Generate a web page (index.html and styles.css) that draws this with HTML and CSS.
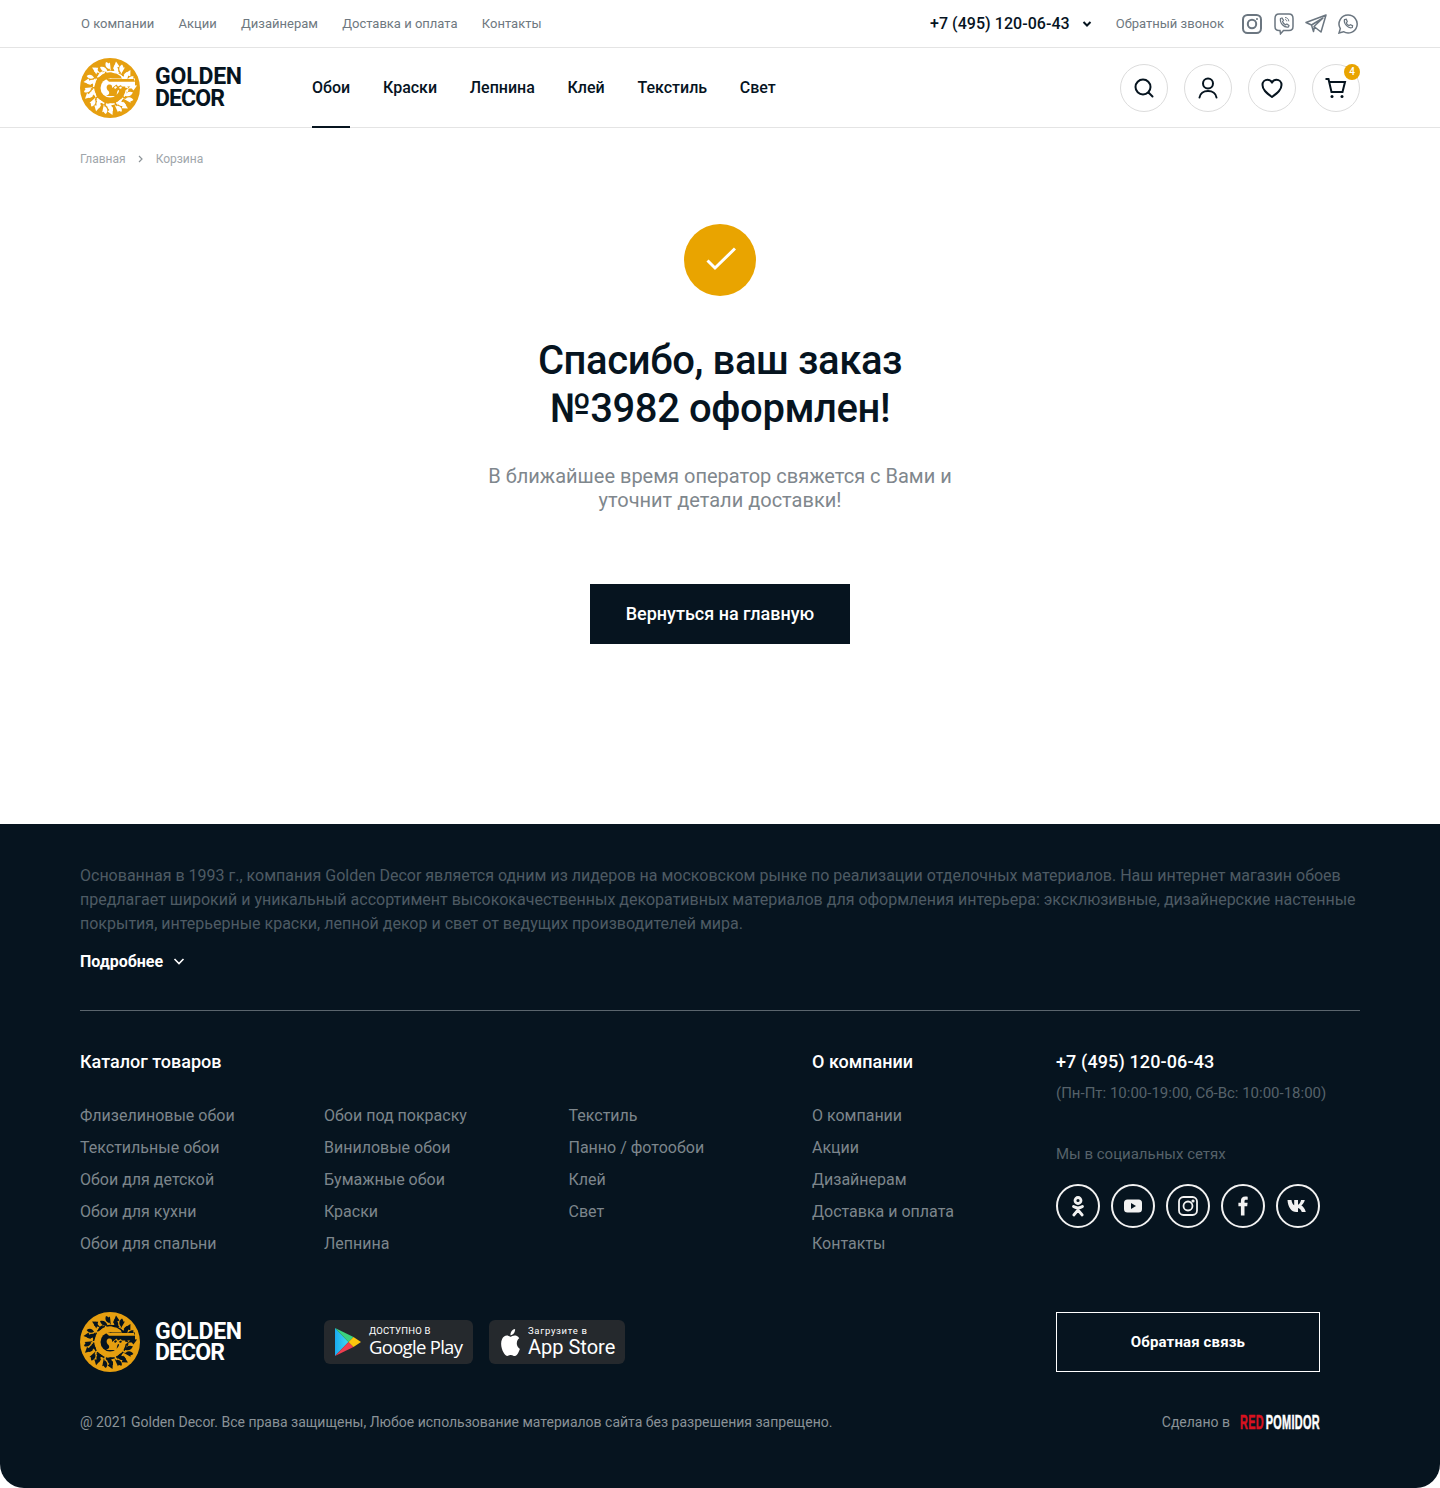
FILE: index.html
```html
<!DOCTYPE html>
<html lang="ru">
<head>
<meta charset="utf-8">
<title>Golden Decor — заказ оформлен</title>
<link rel="stylesheet" href="styles.css">
</head>
<body>
<svg class="defs" width="0" height="0" aria-hidden="true">
  <symbol id="logo-mark" viewBox="0 0 60 60">
    <circle cx="30" cy="30" r="30" fill="#e69f10"/>
    <g class="cut">
      <g id="leaf"><path d="M26 4c3.500 1 4.500 3.500 3 7-2.800-1-4.500-3.500-3-7z"/><path d="M20 9c3.500-1 6.500.5 7.500 4.500-3.500 1-6.500-.5-7.500-4.500z"/><path d="M36 3.500l-3 7.500 6.500-2.500z"/><path d="M32 14c2-1.800 5.500-1.800 7.500.5-2.300 1.500-5.500 1.500-7.500-.5z"/><path d="M15 9.500l5.500 6-6.500-2z"/></g>
      <use href="#leaf" transform="rotate(36 30 30)"/>
      <use href="#leaf" transform="rotate(72 30 30)"/>
      <use href="#leaf" transform="rotate(126 30 30)"/>
      <use href="#leaf" transform="rotate(162 30 30)"/>
      <use href="#leaf" transform="rotate(198 30 30)"/>
      <use href="#leaf" transform="rotate(234 30 30)"/>
      <use href="#leaf" transform="rotate(270 30 30)"/>
      <use href="#leaf" transform="rotate(306 30 30)"/>
    </g>
    <circle cx="30" cy="30" r="16.500" fill="none" class="ring-cut"/>
    <circle cx="30" cy="30" r="15" fill="#e69f10"/>
    <circle class="cut" cx="30" cy="30" r="9.500"/>
    <path class="cut" d="M30 20.500h25v8H30z"/>
    <path fill="#e69f10" d="M26 21h28l1 2.800H29z"/>
    <path fill="#e69f10" d="M26 38c3-1 4-3 2.500-5-2.500-2-2.500-6 .5-6.500 2.500-.5 3.500 1.500 3 3.500l4.500-3.500 1.500 2 3-1.500 1 2.500 6 .5c-1.500 3-7 4-10 2-1 2-1.500 4-1 6z"/>
    <path class="cut" d="M34 29.500l2-1.500 1 1.500-2 1.500zM39 29.500l2-1 1 1.500-2 1z"/>
  </symbol>
</svg>

<header class="site-header">
  <div class="topbar">
    <nav class="top-links">
      <a>О компании</a><a>Акции</a><a>Дизайнерам</a><a>Доставка и оплата</a><a>Контакты</a>
    </nav>
    <div class="top-right">
      <a class="top-phone">+7 (495) 120-06-43</a>
      <svg class="chev" width="10" height="6" viewBox="0 0 10 6"><path d="M1.500 1L5 4.500 8.500 1" fill="none" stroke="#06141f" stroke-width="2"/></svg>
      <a class="callback">Обратный звонок</a>
      <div class="messengers">
        <svg width="20" height="20" viewBox="0 0 20 20" fill="none" stroke="#6b7680" stroke-width="2"><rect x="1" y="1" width="18" height="18" rx="4.500"/><circle cx="10" cy="10" r="4.200"/><circle cx="15" cy="5" r=".6" fill="#6b7680" stroke-width="1"/></svg>
        <svg class="viber" width="20" height="22" viewBox="0 0 20 22" fill="none" stroke="#6b7680" stroke-width="1.500"><path d="M6 17.500H5c-2.500 0-4-1.500-4-4V5.500C1 3 2.500 1 5 1h10c2.500 0 4 2 4 4.500v8c0 2.500-1.500 4-4 4H9.500L6.500 20.800z"/><path d="M6.500 5.500l1.500-.5 1.500 2.300-1 1.200c.6 1.700 1.700 2.800 3.200 3.400l1.200-1 2.100 1.500-.5 1.500c-4.500 1-9-4-8-8.400z" stroke-width="1.200"/><path d="M11 4.500c2 0 3.800 1.600 3.800 3.800M11 6.500c1 0 1.800.8 1.800 1.800" stroke-width="1"/></svg>
        <svg width="22" height="20" viewBox="0 0 22 20" fill="none" stroke="#6b7680" stroke-width="1.500" stroke-linejoin="round"><path d="M21 1L1 8.500l5.500 2.500L18 4 9 12.500l7 5.500zM6.500 11l2 6.500 1-5"/></svg>
        <svg width="20" height="20" viewBox="0 0 20 20" fill="none" stroke="#6b7680" stroke-width="1.500"><path d="M10 1a9 9 0 0 0-7.700 13.600L1 19l4.500-1.300A9 9 0 1 0 10 1z"/><path d="M6.500 5.500l1.800-.3 1 2.500-1 1.200c.6 1.300 1.500 2.100 2.800 2.700l1.200-1 2.300 1.100-.3 1.800c-3.800 1.600-9-3.900-7.800-8z" stroke-width="1.200"/></svg>
      </div>
    </div>
  </div>
  <div class="mainbar">
    <a class="logo logo-light">
      <svg class="logo-mark" width="60" height="60"><use href="#logo-mark"/></svg>
      <span class="logo-text"><span class="lt-1">GOLDEN</span><span class="lt-2">DECOR</span></span>
    </a>
    <nav class="main-nav">
      <a class="active">Обои</a><a>Краски</a><a>Лепнина</a><a>Клей</a><a>Текстиль</a><a>Свет</a>
    </nav>
    <div class="actions">
      <a class="round"><svg width="24" height="24" viewBox="0 0 24 24" fill="none" stroke="#06141f" stroke-width="2"><circle cx="11" cy="11" r="7.500"/><path d="M16.500 16.500l4 4" stroke-linecap="round"/></svg></a>
      <a class="round"><svg width="24" height="24" viewBox="0 0 24 24" fill="none" stroke="#06141f" stroke-width="2"><circle cx="12" cy="7.500" r="5"/><path d="M3.500 21.500c.5-4 4-6.500 8.500-6.500s8 2.500 8.500 6.500" stroke-linecap="round"/></svg></a>
      <a class="round"><svg width="24" height="24" viewBox="0 0 24 24" fill="none" stroke="#06141f" stroke-width="2" stroke-linejoin="round"><path d="M12 21C6 16.500 2.500 13.500 2.500 9c0-3 2.300-5.200 5-5.200 1.900 0 3.500 1 4.500 2.800 1-1.800 2.600-2.800 4.500-2.800 2.700 0 5 2.200 5 5.200 0 4.500-3.500 7.500-9.500 12z"/></svg></a>
      <a class="round cart"><svg width="24" height="24" viewBox="0 0 24 24" fill="none" stroke="#06141f" stroke-width="2"><path d="M1.500 3h3l3 13h11l2.500-10h-15"/><circle cx="8" cy="20.500" r="1.500" fill="#06141f" stroke="none"/><circle cx="18" cy="20.500" r="1.500" fill="#06141f" stroke="none"/></svg><span class="badge">4</span></a>
    </div>
  </div>
</header>

<div class="crumbs"><a>Главная</a><svg width="5" height="8" viewBox="0 0 5 8"><path d="M1 1l3 3-3 3" fill="none" stroke="#8d9499" stroke-width="1.200"/></svg><a>Корзина</a></div>

<main class="thanks">
  <div class="ok"><svg width="32" height="32" viewBox="0 0 32 32"><path d="M3.500 16.500L11 24 31 4.500" fill="none" stroke="#fff" stroke-width="3"/></svg></div>
  <h1>Спасибо, ваш заказ<br>№3982 оформлен!</h1>
  <p>В ближайшее время оператор свяжется с Вами и<br>уточнит детали доставки!</p>
  <a class="btn-home">Вернуться на главную</a>
</main>

<footer class="footer">
  <p class="about">Основанная в 1993 г., компания Golden Decor является одним из лидеров на московском рынке по реализации отделочных материалов. Наш интернет магазин обоев предлагает широкий и уникальный ассортимент высококачественных декоративных материалов для оформления интерьера: эксклюзивные, дизайнерские настенные покрытия, интерьерные краски, лепной декор и свет от ведущих производителей мира.</p>
  <a class="more">Подробнее <svg width="12" height="7" viewBox="0 0 12 7"><path d="M1.500 1L6 5.500 10.500 1" fill="none" stroke="#fff" stroke-width="1.600"/></svg></a>
  <hr class="rule">
  <div class="columns">
    <div class="col col-wide">
      <h3>Каталог товаров</h3>
      <div class="col-lists">
        <ul><li>Флизелиновые обои</li><li>Текстильные обои</li><li>Обои для детской</li><li>Обои для кухни</li><li>Обои для спальни</li></ul>
        <ul><li>Обои под покраску</li><li>Виниловые обои</li><li>Бумажные обои</li><li>Краски</li><li>Лепнина</li></ul>
        <ul><li>Текстиль</li><li>Панно / фотообои</li><li>Клей</li><li>Свет</li></ul>
      </div>
    </div>
    <div class="col">
      <h3>О компании</h3>
      <ul class="single"><li>О компании</li><li>Акции</li><li>Дизайнерам</li><li>Доставка и оплата</li><li>Контакты</li></ul>
    </div>
    <div class="col">
      <h3 class="phone">+7 (495) 120-06-43</h3>
      <div class="hours">(Пн-Пт: 10:00-19:00, Сб-Вс: 10:00-18:00)</div>
      <div class="social-title">Мы в социальных сетях</div>
      <div class="socials">
        <a class="soc"><svg width="24" height="24" viewBox="0 0 24 24" fill="none" stroke="#f2f2f2" stroke-width="2.800"><circle cx="12" cy="6.500" r="3"/><path d="M7.500 12.500c3 1.800 6 1.800 9 0M12 14v1.500M7.800 21l4.200-5 4.200 5" stroke-linecap="round"/></svg></a>
        <a class="soc"><svg width="20" height="16" viewBox="0 0 20 16"><rect x="1" y="1.500" width="18" height="13" rx="3.500" fill="#f2f2f2"/><path d="M8 5l5 3-5 3z" fill="#06141f"/></svg></a>
        <a class="soc"><svg width="22" height="22" viewBox="0 0 22 22" fill="none" stroke="#f2f2f2" stroke-width="1.800"><rect x="2" y="2" width="18" height="18" rx="4.500"/><circle cx="11" cy="11" r="4.500"/><circle cx="16" cy="6" r=".7" fill="#f2f2f2"/></svg></a>
        <a class="soc"><svg width="24" height="24" viewBox="0 0 24 24"><path d="M14.500 21.500v-9.200H17.200l.4-3.600h-3.100V7.300c0-1 .3-1.600 1.700-1.600h1.500V2.700c-.5-.1-1.400-.2-2.400-.2-2.900 0-4.400 1.700-4.400 4.500v1.700H8.400v3.600h2.500v9.200z" fill="#f2f2f2" transform="translate(-1 0)"/></svg></a>
        <a class="soc"><svg width="22" height="14" viewBox="0 0 22 14"><path d="M.5 1h4c.3 2.500 1.300 4.500 2.700 5.300V1h3.800v4.700c1.200-.2 2.500-2.200 3.100-4.700h3.700c-.5 2.600-2.200 4.500-3.400 5.400 1.400.8 3.500 2.700 4.400 6.600h-4c-.7-2.200-2.300-3.800-3.800-4V13H9.300C4.500 13 1 8.500.5 1z" fill="#f2f2f2"/></svg></a>
      </div>
    </div>
  </div>

  <div class="bottom">
    <a class="logo logo-dark">
      <svg class="logo-mark" width="60" height="60"><use href="#logo-mark"/></svg>
      <span class="logo-text"><span class="lt-1">GOLDEN</span><span class="lt-2">DECOR</span></span>
    </a>
    <div class="stores">
      <a class="store store-gp">
        <svg width="28" height="30" viewBox="0 0 28 30"><path d="M1 1v28l13.500-14z" fill="url(#gpb)"/><path d="M1 1l13.500 14 5-5z" fill="#3bd37e"/><path d="M1 29l13.500-14 5 5z" fill="#ef3f50"/><path d="M19.500 10l7.500 5-7.500 5-5-5z" fill="#fcc60d"/><defs><linearGradient id="gpb" x1="0" y1="0" x2="1" y2="0"><stop offset="0" stop-color="#19a9f0"/><stop offset="1" stop-color="#3fdcf0"/></linearGradient></defs></svg>
        <span class="store-text"><small>ДОСТУПНО В</small><b>Google Play</b></span>
      </a>
      <a class="store store-as">
        <svg width="23" height="27" viewBox="0 0 24 24" preserveAspectRatio="none"><path fill="#fff" d="M12.152 6.896c-.948 0-2.415-1.078-3.960-1.040-2.040.027-3.910 1.183-4.961 3.014-2.117 3.675-.546 9.103 1.519 12.090 1.013 1.454 2.208 3.090 3.792 3.039 1.520-.065 2.090-.987 3.935-.987 1.831 0 2.350.987 3.960.948 1.637-.026 2.676-1.480 3.676-2.948 1.156-1.688 1.636-3.325 1.662-3.415-.039-.013-3.182-1.221-3.220-4.857-.026-3.040 2.480-4.494 2.597-4.559-1.429-2.090-3.623-2.324-4.390-2.376-2-.156-3.675 1.090-4.610 1.090zM15.530 3.830c.843-1.012 1.400-2.427 1.245-3.830-1.207.052-2.662.805-3.532 1.818-.78.896-1.454 2.338-1.273 3.714 1.338.104 2.715-.688 3.559-1.701"/></svg>
        <span class="store-text"><small>Загрузите в</small><b>App Store</b></span>
      </a>
    </div>
    <a class="btn-feedback">Обратная связь</a>
  </div>

  <div class="legal">
    <span>@ 2021 Golden Decor. Все права защищены, Любое использование материалов сайта без разрешения запрещено.</span>
    <span class="made">Сделано в <span class="pomidor"><span class="pomidor-in"><i>RED</i><b>POMIDOR</b></span></span></span>
  </div>
</footer>
</body>
</html>
```

FILE: styles.css
```css
* { box-sizing: border-box; }
html, body { margin: 0; padding: 0; background: #fff; }
body { font-family: Roboto, "Liberation Sans", sans-serif; color: #06141f; width: 1440px; }
a { color: inherit; text-decoration: none; }
ul { list-style: none; margin: 0; padding: 0; }
.defs { display: block; height: 0; }
.cut { fill: var(--logo-bg); }
.ring-cut { stroke: var(--logo-bg); stroke-width: 1.500; stroke-dasharray: 9 1.500; }
.logo-light { --logo-bg: #fff; }
.logo-dark { --logo-bg: #06141f; }

.site-header { display: block; }
.topbar { height: 48px; padding: 0 82px 0 81px; border-bottom: 1px solid #e4e4e4; display: flex; align-items: center; justify-content: space-between; }
.top-links { display: flex; gap: 24.300px; font-size: 13px; color: #6e7880; }
.top-right { display: flex; align-items: center; }
.top-phone { font-size: 16px; font-weight: 500; letter-spacing: .05px; color: #06141f; }
.chev { margin-left: 12px; }
.callback { margin-left: 24px; font-size: 13px; color: #6e7880; }
.messengers { display: flex; align-items: center; gap: 11px; margin-left: 18px; }
.viber { margin-left: 1px; }

.mainbar { height: 80px; padding: 0 80px; border-bottom: 1px solid #e4e4e4; display: flex; align-items: center; }
.logo { display: flex; align-items: center; gap: 15px; width: 232px; flex: none; }
.logo-mark { display: block; flex: none; }
.logo-text { font-family: Roboto, sans-serif; font-weight: 700; font-size: 23px; letter-spacing: -.2px; display: flex; flex-direction: column; }
.lt-1, .lt-2 { display: block; height: 21.500px; line-height: 21.500px; }
.lt-2 { letter-spacing: -.9px; }
.logo-light .logo-text { color: #06141f; }
.logo-dark .logo-text { color: #fff; }
.main-nav { display: flex; gap: 32.700px; height: 80px; font-size: 16px; font-weight: 500; }
.main-nav a { display: flex; align-items: center; border-bottom: 2px solid transparent; height: 80px; padding-top: 2px; }
.main-nav a.active { border-bottom-color: #06141f; }
.actions { margin-left: auto; display: flex; gap: 16px; }
.round { width: 48px; height: 48px; border: 1px solid #dcdcdc; border-radius: 50%; display: flex; align-items: center; justify-content: center; position: relative; }
.badge { position: absolute; top: -1px; right: -1px; width: 16px; height: 16px; border-radius: 50%; background: #e9a400; color: #fff; font-size: 10px; font-weight: 500; line-height: 16px; text-align: center; }

.crumbs { display: flex; align-items: center; gap: 12.500px; padding: 14px 80px 0; height: 48px; font-size: 12px; color: #a0a6ab; line-height: 14px; }

.thanks { display: flex; flex-direction: column; align-items: center; padding-top: 48px; height: 648px; text-align: center; }
.ok { width: 72px; height: 72px; border-radius: 50%; background: #e9a400; display: flex; align-items: center; justify-content: center; }
.thanks h1 { margin: 41px 0 0; font-size: 40px; line-height: 48px; font-weight: 500; letter-spacing: -.4px; color: #06141f; }
.thanks p { margin: 31px 0 0; font-size: 20px; line-height: 24px; color: #7f878d; }
.btn-home { margin-top: 72px; width: 260px; height: 60px; background: #06141f; color: #fff; font-size: 18px; font-weight: 500; display: flex; align-items: center; justify-content: center; padding-bottom: 1px; }

.footer { background: #06141f; height: 664px; padding: 40px 80px 0; border-radius: 0 0 24px 24px; color: #7d868c; }
.about { margin: 0; font-size: 16px; line-height: 24px; color: #4e5b64; }
.more { display: flex; align-items: center; gap: 6px; margin-top: 13px; height: 24px; font-size: 16px; font-weight: 700; color: #fff; }
.more svg { margin-left: 4px; }
.rule { margin: 37px 0 0; border: 0; height: 1px; background: #5a656d; }
.columns { display: grid; grid-template-columns: 732px 244px 1fr; margin-top: 40px; height: 261px; }
.col h3 { margin: 0; font-size: 18px; line-height: 22px; font-weight: 500; color: #fff; }
.col-lists { display: grid; grid-template-columns: 244px 244.500px 243.500px; margin-top: 27px; }
.col-lists ul, .single { font-size: 16px; line-height: 32px; }
.single { margin-top: 27px; }
.col .phone { font-size: 18px; letter-spacing: .12px; }
.hours { margin-top: 9px; font-size: 15px; line-height: 22px; color: #56626a; }
.social-title { margin-top: 39px; font-size: 15px; line-height: 22px; color: #56626a; }
.socials { display: flex; gap: 11px; margin-top: 19px; }
.soc { width: 44px; height: 44px; border: 2px solid #f2f2f2; border-radius: 50%; display: flex; align-items: center; justify-content: center; }

.bottom { display: grid; grid-template-columns: 244px 732px 264px; align-items: start; }
.stores { display: flex; gap: 16px; margin-top: 8px; }
.store { height: 44px; background: #25292d; border-radius: 6px; display: flex; align-items: center; color: #fff; }
.store-gp { width: 149px; padding-left: 10px; gap: 7px; }
.store-as { width: 136px; padding-left: 10px; gap: 6px; }
.store-text { display: flex; flex-direction: column; font-family: "Open Sans", Roboto, sans-serif; margin-top: -2px; }
.store-text small { font-family: Roboto, sans-serif; font-size: 9.500px; line-height: 11px; letter-spacing: .2px; }
.store-as .store-text small { letter-spacing: .7px; }
.store-text b { font-weight: 400; font-size: 18.500px; line-height: 22px; letter-spacing: -.7px; }
.store-as .store-text b { font-family: Roboto, sans-serif; font-size: 20px; letter-spacing: 0; }
.btn-feedback { height: 60px; border: 1px solid #fff; color: #fff; font-size: 15px; font-weight: 700; letter-spacing: .15px; display: flex; align-items: center; justify-content: center; }

.legal { display: flex; justify-content: space-between; align-items: center; margin-top: 40px; height: 20px; font-size: 14px; color: #8a9297; padding-right: 40px; }
.made { display: flex; align-items: center; gap: 10px; }
.pomidor { display: block; width: 80px; height: 16px; }
.pomidor-in { display: block; white-space: nowrap; font-family: "Liberation Sans Narrow", "Liberation Sans", sans-serif; font-weight: 700; font-size: 20px; line-height: 16px; letter-spacing: .6px; -webkit-text-stroke: .5px currentColor; transform: scaleX(.545); transform-origin: left center; color: #fff; }
.pomidor-in i { font-style: normal; color: #d8121f; margin-right: 3px; }
.pomidor-in b { color: #fff; }
```
